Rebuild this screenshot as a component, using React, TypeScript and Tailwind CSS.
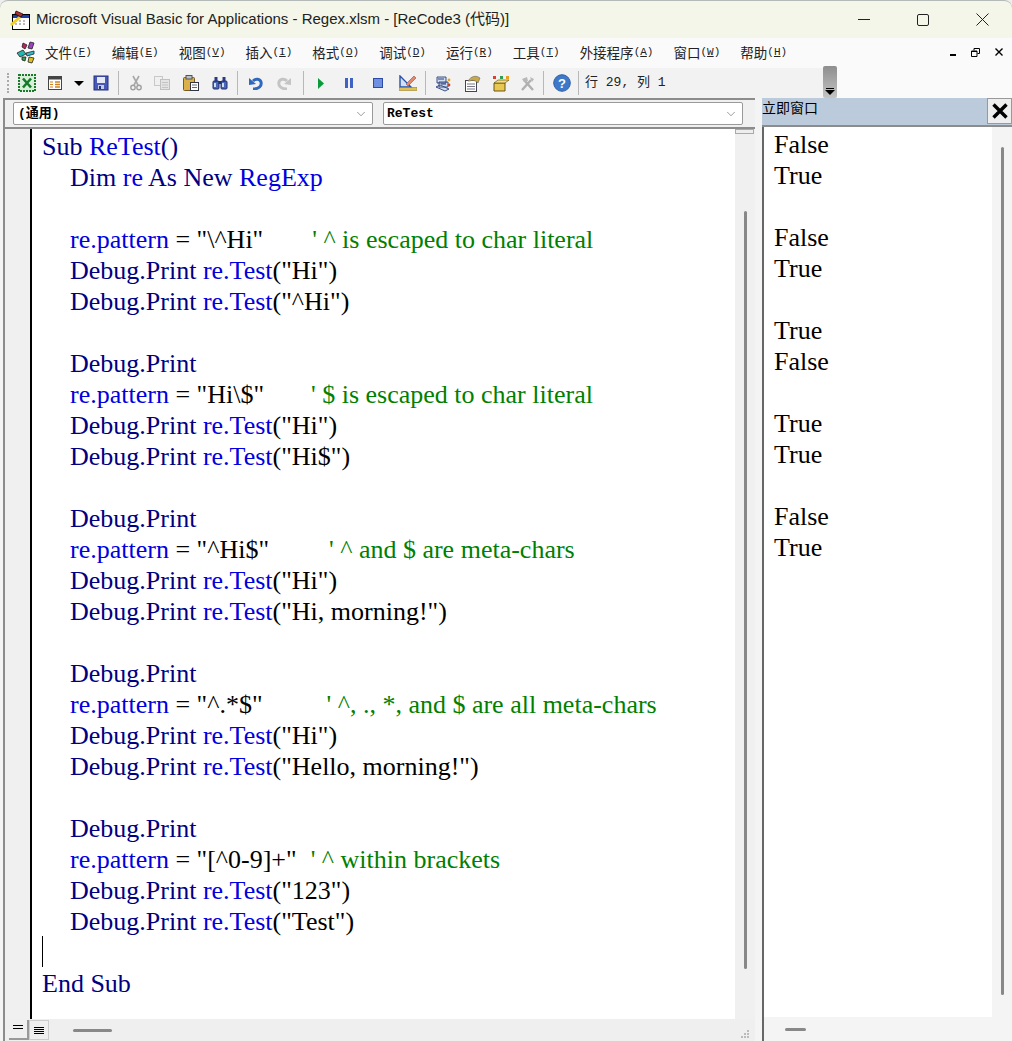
import type { ReactNode } from 'react'
import { ChevronDown } from 'lucide-react'

const SERIF = 'font-["Liberation_Serif","Times_New_Roman",serif]'

const K = ({ children }: { children: ReactNode }) => <span className="text-[#000080]">{children}</span>
const B = ({ children }: { children: ReactNode }) => <span className="text-[#0000e0]">{children}</span>
const C = ({ children }: { children: ReactNode }) => <span className="text-[#008000]">{children}</span>

function Pattern({ value, gap, comment }: { value: string; gap: string; comment: string }) {
  return (
    <div className="h-[31px] pl-[28px]">
      <B>re.pattern</B> = {value}
      <span className={gap} />
      <C>{comment}</C>
    </div>
  )
}

function TestLine({ arg }: { arg: string }) {
  return (
    <div className="h-[31px] pl-[28px]">
      <K>Debug.Print</K> <B>re.Test</B>("{arg}")
    </div>
  )
}

const DebugLine = () => (
  <div className="h-[31px] pl-[28px]">
    <K>Debug.Print</K>
  </div>
)

const Blank = () => <div className="h-[31px]" />

const immediate = ['False', 'True', '', 'False', 'True', '', 'True', 'False', '', 'True', 'True', '', 'False', 'True']

const menus = [
  ['文件', 'F'],
  ['编辑', 'E'],
  ['视图', 'V'],
  ['插入', 'I'],
  ['格式', 'O'],
  ['调试', 'D'],
  ['运行', 'R'],
  ['工具', 'T'],
  ['外接程序', 'A'],
  ['窗口', 'W'],
  ['帮助', 'H'],
]

function Sep() {
  return <div className="w-px h-[24px] bg-[#b8b8b8]" />
}

function AppIcon() {
  return (
    <svg width="22" height="22" viewBox="0 0 22 22">
      <rect x="2.5" y="5.5" width="17" height="15" fill="#fff" stroke="#000" />
      <rect x="3" y="6" width="16" height="3" fill="#1e3fa8" />
      <path d="M5 12h2M9 12h2M13 12h2M5 15h2M9 15h2M13 15h2" stroke="#777" />
      <path d="M1 16 L10 8" stroke="#f0d020" strokeWidth="3" />
      <path d="M6 2 L13 5 L11 8 L5 5Z" fill="#b03030" stroke="#000" strokeWidth="0.7" />
    </svg>
  )
}

function VbaMenuIcon() {
  return (
    <svg width="24" height="24" viewBox="0 0 24 24">
      <path d="M3 13 L9 10 L12 14 L6 17Z" fill="#20b8b0" stroke="#222" strokeWidth="0.8" />
      <path d="M16 2 L20 3 L18 9 L14 8Z" fill="#a040c0" stroke="#222" strokeWidth="0.8" />
      <path d="M9 3 L13 5 L11 9 L8 7Z" fill="#c02060" stroke="#222" strokeWidth="0.8" />
      <path d="M12 13 L20 11 L20 14 L13 16Z" fill="#30c0d0" stroke="#222" strokeWidth="0.8" />
      <path d="M15 17 L20 18 L18 23 L14 22Z" fill="#d8c020" stroke="#222" strokeWidth="0.8" />
      <path d="M8 17 L12 17 L11 21 L8 20Z" fill="#30a050" stroke="#222" strokeWidth="0.8" />
    </svg>
  )
}

function ToolbarIcons() {
  return (
    <>
      {/* excel */}
      <svg width="18" height="18" viewBox="0 0 18 18">
        <rect x="1" y="1" width="16" height="16" fill="#d8efd8" stroke="#1a7a2a" strokeWidth="2" strokeDasharray="2 1" />
        <path d="M5 4.5 L13 13.5 M13 4.5 L5 13.5" stroke="#157a2a" strokeWidth="2.6" />
      </svg>
      {/* project explorer form */}
      <svg className="ml-[11px]" width="16" height="16" viewBox="0 0 16 16">
        <rect x="1.5" y="1.5" width="13" height="13" fill="#fff" stroke="#444" />
        <rect x="2" y="2" width="12" height="2.5" fill="#444" />
        <path d="M3 7h3M3 9.5h3M3 12h3" stroke="#d08020" />
        <path d="M8 7h5M8 9.5h5M8 12h5" stroke="#d08020" strokeWidth="1.5" />
      </svg>
      <div className="ml-[11px] w-0 h-0 border-x-[5px] border-x-transparent border-t-[5px] border-t-black" />
      {/* save */}
      <svg className="ml-[9px]" width="16" height="16" viewBox="0 0 16 16">
        <rect x="1" y="1" width="14" height="14" fill="#4a58b8" stroke="#23307e" />
        <rect x="4" y="2" width="8" height="6" fill="#e6e8f4" />
        <rect x="5" y="10" width="6" height="4" fill="#c8cce0" />
        <rect x="6" y="11" width="2" height="3" fill="#23307e" />
      </svg>
      <div className="ml-[9px]"><Sep /></div>
      {/* cut */}
      <svg className="ml-[10px]" width="14" height="16" viewBox="0 0 14 16">
        <path d="M4 1 L9 10 M10 1 L5 10" stroke="#a8a8a8" strokeWidth="1.6" />
        <circle cx="4" cy="12.5" r="2.2" fill="none" stroke="#a0a0a0" strokeWidth="1.4" />
        <circle cx="10" cy="12.5" r="2.2" fill="none" stroke="#a0a0a0" strokeWidth="1.4" />
      </svg>
      {/* copy */}
      <svg className="ml-[11px]" width="16" height="14" viewBox="0 0 16 14">
        <rect x="0.5" y="0.5" width="8" height="9" fill="#f0f0f0" stroke="#c8c8c8" />
        <rect x="6.5" y="3.5" width="9" height="10" fill="#e4e4e4" stroke="#c0c0c0" />
        <path d="M8 6.5h6M8 9h6M8 11.5h6" stroke="#c4c4c4" />
      </svg>
      {/* paste */}
      <svg className="ml-[13px]" width="16" height="16" viewBox="0 0 16 16">
        <rect x="0.5" y="2.5" width="11" height="13" rx="1" fill="#dcb048" stroke="#7a5a20" />
        <rect x="3" y="0.5" width="6" height="3.5" fill="#b8c0c8" stroke="#555" />
        <rect x="7.5" y="7.5" width="8" height="8" fill="#fff" stroke="#334" />
        <path d="M9 10h5M9 12.5h5" stroke="#667" />
      </svg>
      {/* find */}
      <svg className="ml-[13px]" width="16" height="14" viewBox="0 0 16 14">
        <rect x="1" y="5" width="6" height="8" rx="1" fill="#4a68b8" stroke="#1f2f70" />
        <rect x="9" y="5" width="6" height="8" rx="1" fill="#4a68b8" stroke="#1f2f70" />
        <rect x="2.5" y="1" width="3" height="5" fill="#2a3a80" />
        <rect x="10.5" y="1" width="3" height="5" fill="#2a3a80" />
        <rect x="6.5" y="5" width="3" height="3" fill="#1f2f70" />
        <rect x="2" y="7" width="2" height="4" fill="#cfdcf4" />
        <rect x="10" y="7" width="2" height="4" fill="#cfdcf4" />
      </svg>
      <div className="ml-[9px]"><Sep /></div>
      {/* undo */}
      <svg className="ml-[11px]" width="14" height="14" viewBox="0 0 14 14">
        <path d="M4 13 C10 13 13 10 12 6 C11 3 7 2 4 5" fill="none" stroke="#2f68c0" strokeWidth="3" />
        <path d="M0 2 L7 8 L0 9Z" fill="#2f68c0" />
      </svg>
      {/* redo */}
      <svg className="ml-[14px]" width="14" height="14" viewBox="0 0 14 14">
        <path d="M10 13 C4 13 1 10 2 6 C3 3 7 2 10 5" fill="none" stroke="#c4c4c4" strokeWidth="3" />
        <path d="M14 2 L7 8 L14 9Z" fill="#c4c4c4" />
      </svg>
      <div className="ml-[12px]"><Sep /></div>
      {/* run */}
      <svg className="ml-[14px]" width="6" height="11" viewBox="0 0 6 11">
        <path d="M0 0 L6 5.5 L0 11Z" fill="#0a9a3a" />
      </svg>
      {/* pause */}
      <svg className="ml-[21px]" width="8" height="10" viewBox="0 0 8 10">
        <rect x="0" y="0" width="3" height="10" fill="#3f63c4" />
        <rect x="5" y="0" width="3" height="10" fill="#3f63c4" />
      </svg>
      {/* stop */}
      <svg className="ml-[20px]" width="10" height="10" viewBox="0 0 10 10">
        <rect x="0.5" y="0.5" width="9" height="9" fill="#6f8fe0" stroke="#2d4aa8" />
      </svg>
      {/* design mode */}
      <svg className="ml-[16px]" width="18" height="16" viewBox="0 0 18 16">
        <path d="M1 1 L1 12 L12 12Z" fill="#cfe0f8" stroke="#2a50a8" strokeWidth="1.4" />
        <path d="M7 9 L15 1 L17 3 L9 11Z" fill="#e08870" stroke="#905040" strokeWidth="0.6" />
        <rect x="0" y="12.5" width="18" height="3" fill="#e0c050" stroke="#8a7020" strokeWidth="0.5" />
      </svg>
      <div className="ml-[8px]"><Sep /></div>
      {/* project */}
      <svg className="ml-[9px]" width="17" height="17" viewBox="0 0 17 17">
        <path d="M2 2h9v6h-9zM4 7h9v5h-9zM1 12l9 4 4-2-9-4z" fill="#cfdcf0" stroke="#2a3f78" strokeWidth="0.9" />
        <path d="M3 4h6M6 9h5" stroke="#2a3f78" />
        <circle cx="14" cy="5" r="1.4" fill="#e8a020" />
        <circle cx="14" cy="10" r="1.4" fill="#d04020" />
      </svg>
      {/* properties */}
      <svg className="ml-[12px]" width="17" height="17" viewBox="0 0 17 17">
        <rect x="1.5" y="5.5" width="11" height="11" fill="#fff" stroke="#445" />
        <path d="M3 9h8M3 11.5h8M3 14h8" stroke="#778" />
        <path d="M4 6 C7 1 12 0 16 3 L14 8 C11 5 8 5 6 6Z" fill="#c8a848" stroke="#666" strokeWidth="0.6" />
      </svg>
      {/* object browser */}
      <svg className="ml-[11px]" width="17" height="17" viewBox="0 0 17 17">
        <path d="M2 8h11v8h-11z" fill="#e8c850" stroke="#6a5518" />
        <path d="M2 8l4-3h11l-4 3z" fill="#f4dc80" stroke="#6a5518" strokeWidth="0.7" />
        <rect x="1" y="1" width="3" height="3" fill="#d84030" />
        <rect x="8" y="1" width="3" height="3" fill="#30a050" />
        <rect x="14" y="1" width="3" height="3" fill="#e8a020" />
      </svg>
      {/* toolbox */}
      <svg className="ml-[11px]" width="15" height="15" viewBox="0 0 15 15">
        <path d="M2 14 L11 4 M13 14 L4 4" stroke="#b0b0b0" strokeWidth="2.4" />
        <path d="M2 3 L7 1 L8 5 L4 6Z M10 1 L14 3 L12 6Z" fill="#b8b8b8" />
      </svg>
      <div className="ml-[8px]"><Sep /></div>
      {/* help */}
      <svg className="ml-[9px]" width="18" height="18" viewBox="0 0 18 18">
        <circle cx="9" cy="9" r="8.3" fill="#3e78c8" stroke="#2f5fa8" />
        <text x="9" y="14" textAnchor="middle" fontSize="13" fontWeight="700" fill="#fff" fontFamily="Liberation Sans">?</text>
      </svg>
      <div className="ml-[7px]"><Sep /></div>
    </>
  )
}

function Thumb({ vertical, className }: { vertical?: boolean; className: string }) {
  return <div className={`${vertical ? 'w-[3px]' : 'h-[3px]'} bg-[#888888] rounded-full ${className}`} />
}

export default function App() {
  return (
    <div className={`w-[1012px] h-[1041px] overflow-hidden flex flex-col bg-[#eeeeee] font-["Noto_Sans_CJK_SC","Liberation_Sans",sans-serif] text-black`}>
      {/* title bar */}
      <div className="h-[38px] shrink-0 flex items-center bg-[#f3f6e8] border-t border-[#b4bab8] rounded-t-[8px] pl-[10px]">
        <AppIcon />
        <span className="ml-[4px] text-[15px] text-[#222] font-['Liberation_Sans','Noto_Sans_CJK_SC',sans-serif]">
          Microsoft Visual Basic for Applications - Regex.xlsm - [ReCode3 (代码)]
        </span>
        <div className="ml-auto flex items-center mr-[23px]">
          <div className="w-[12px] h-px bg-[#222]" />
          <div className="ml-[47px] w-[12px] h-[12px] border border-[#222] rounded-[2px]" />
          <svg className="ml-[47px]" width="13" height="13" viewBox="0 0 13 13">
            <path d="M0.5 0.5 L12.5 12.5 M12.5 0.5 L0.5 12.5" stroke="#222" />
          </svg>
        </div>
      </div>

      {/* menu bar */}
      <div className="h-[28px] shrink-0 flex items-center bg-[#fafafa] pl-[14px] pr-[8px]">
        <VbaMenuIcon />
        <div className="ml-[7px] flex gap-[20px] text-[13.5px] text-[#222]">
          {menus.map(([label, key]) => (
            <span key={key} className="flex items-center">
              {label}
              <span className="font-['Liberation_Mono',monospace] text-[11px]">
                (<span className="underline">{key}</span>)
              </span>
            </span>
          ))}
        </div>
        <div className="ml-auto flex items-center gap-[15px] mr-[1px]">
          <div className="w-[6px] h-[2px] bg-black mt-[6px]" />
          <svg width="9" height="9" viewBox="0 0 9 9">
            <path d="M3 2.5V0.5H8.5V5.5H6.5M0.5 3H6V8.5H0.5Z" fill="none" stroke="#000" />
            <path d="M0.5 3.5H6" stroke="#000" />
          </svg>
          <svg width="8" height="8" viewBox="0 0 8 8">
            <path d="M0.5 0.5 L7.5 7.5 M7.5 0.5 L0.5 7.5" stroke="#000" strokeWidth="1.4" />
          </svg>
        </div>
      </div>

      {/* toolbar */}
      <div className="h-[32px] shrink-0 flex bg-[#fafafa]">
        <div className="w-[837px] h-[30px] mt-[2px] flex items-center bg-[#f2f2f2] pl-[7px] relative">
          <div className="w-[2px] h-[20px] border-l-2 border-dotted border-[#aaaaaa]" />
          <div className="ml-[9px] flex items-center">
            <ToolbarIcons />
          </div>
          <span className={`ml-[6px] text-[13px] text-[#222] font-['Liberation_Mono','Noto_Sans_CJK_SC',monospace]`}>
            行 29, 列 1
          </span>
          <div className="absolute right-0 top-[-2px] w-[14px] h-[32px] bg-gradient-to-b from-[#8e8e8e] to-[#c4c4c4] rounded-[2px] flex flex-col items-center justify-end pb-[3px]">
            <div className="w-[8px] h-px bg-black mb-px" />
            <div className="w-0 h-0 border-x-[5px] border-x-transparent border-t-[5px] border-t-black" />
          </div>
        </div>
      </div>

      {/* body */}
      <div className="flex-1 min-h-0 flex bg-[#f4f4f4]">
        {/* code window */}
        <div className="w-[752px] ml-[3px] flex flex-col border-l-[2px] border-t-[2px] border-[#8c8c8c] bg-[#f0f0f0]">
          <div className="h-[29px] shrink-0 flex items-center gap-[10px] px-[8px] border-b-[2px] border-[#8c8c8c]">
            <div className="w-[360px] h-[23px] bg-white border border-[#9a9a9a] rounded-[2px] flex items-center justify-between pl-[4px] pr-[4px]">
              <span className="text-[13px] font-['Liberation_Mono','Noto_Sans_CJK_SC',monospace] font-bold">(通用)</span>
              <ChevronDown size={14} strokeWidth={1} className="text-[#555]" />
            </div>
            <div className="w-[360px] h-[23px] bg-white border border-[#9a9a9a] rounded-[2px] flex items-center justify-between pl-[3px] pr-[4px]">
              <span className="text-[13px] font-['Liberation_Mono',monospace] font-bold">ReTest</span>
              <ChevronDown size={14} strokeWidth={1} className="text-[#555]" />
            </div>
          </div>
          <div className="flex-1 min-h-0 flex">
            <div className="w-[25px] shrink-0 bg-[#f0f0f0]" />
            <div className={`flex-1 min-w-0 bg-white border-l-[2px] border-black pl-[10px] pt-[2px] text-[26px] leading-[31px] whitespace-pre ${SERIF}`}>
              <div className="h-[31px]"><K>Sub</K> <B>ReTest</B><K>()</K></div>
              <div className="h-[31px] pl-[28px]"><K>Dim</K> <B>re</B> <K>As New</K> <B>RegExp</B></div>
              <Blank />
              <Pattern value={'"\\^Hi"'} gap="inline-block w-[49px]" comment="' ^ is escaped to char literal" />
              <TestLine arg="Hi" />
              <TestLine arg="^Hi" />
              <Blank />
              <DebugLine />
              <Pattern value={'"Hi\\$"'} gap="inline-block w-[47px]" comment="' $ is escaped to char literal" />
              <TestLine arg="Hi" />
              <TestLine arg="Hi$" />
              <Blank />
              <DebugLine />
              <Pattern value={'"^Hi$"'} gap="inline-block w-[60px]" comment="' ^ and $ are meta-chars" />
              <TestLine arg="Hi" />
              <TestLine arg="Hi, morning!" />
              <Blank />
              <DebugLine />
              <Pattern value={'"^.*$"'} gap="inline-block w-[64px]" comment="' ^, ., *, and $ are all meta-chars" />
              <TestLine arg="Hi" />
              <TestLine arg="Hello, morning!" />
              <Blank />
              <DebugLine />
              <Pattern value={'"[^0-9]+"'} gap="inline-block w-[14px]" comment="' ^ within brackets" />
              <TestLine arg="123" />
              <TestLine arg="Test" />
              <div className="h-[31px] relative">
                <div className="absolute left-0 top-[-1px] w-px h-[31px] bg-black" />
              </div>
              <div className="h-[31px]"><K>End Sub</K></div>
            </div>
            <div className="w-[20px] shrink-0 bg-[#f0f0f0] flex flex-col items-center relative">
              <div className="absolute top-0 left-0 w-[19px] h-[5px] bg-[#eeeeee] border border-[#aaaaaa]" />
              <Thumb vertical className="mt-[82px] h-[758px]" />
            </div>
          </div>
          <div className="h-[22px] shrink-0 flex items-center bg-[#efefef] relative">
            <div className="w-[20px] h-[20px] ml-[4px] border-b-2 border-r-2 border-[#999999] flex flex-col items-center pt-[5px] gap-[2px]">
              <div className="w-[10px] h-px bg-black" />
              <div className="w-[10px] h-px bg-black" />
            </div>
            <div className="w-[20px] h-[20px] border border-[#cccccc] flex flex-col items-center justify-center gap-px">
              <div className="w-[10px] h-px bg-black" />
              <div className="w-[10px] h-px bg-black" />
              <div className="w-[10px] h-px bg-black" />
              <div className="w-[10px] h-px bg-black" />
            </div>
            <Thumb className="ml-[24px] w-[39px]" />
            <div className="absolute right-[6px] bottom-[3px] grid grid-cols-3 gap-px">
              <div className="w-[2px] h-[2px]" />
              <div className="w-[2px] h-[2px]" />
              <div className="w-[2px] h-[2px] bg-[#bbbbbb]" />
              <div className="w-[2px] h-[2px]" />
              <div className="w-[2px] h-[2px] bg-[#bbbbbb]" />
              <div className="w-[2px] h-[2px] bg-[#bbbbbb]" />
              <div className="w-[2px] h-[2px] bg-[#bbbbbb]" />
              <div className="w-[2px] h-[2px] bg-[#bbbbbb]" />
              <div className="w-[2px] h-[2px] bg-[#bbbbbb]" />
            </div>
          </div>
        </div>

        {/* immediate window */}
        <div className="w-[250px] ml-[7px] flex flex-col">
          <div className="h-[29px] shrink-0 flex items-start justify-between bg-[#bccbdc] border-b-[2px] border-[#8c8c8c]">
            <span className="text-[14px] leading-[19px] text-black">立即窗口</span>
            <div className="w-[25px] h-[26px] bg-[#eeeeee] border border-[#999999] flex items-center justify-center">
              <svg width="16" height="16" viewBox="0 0 16 16">
                <path d="M1.5 1.5 L14.5 14.5 M14.5 1.5 L1.5 14.5" stroke="#000" strokeWidth="3.4" />
              </svg>
            </div>
          </div>
          <div className="flex-1 min-h-0 flex border-l-[2px] border-[#666666]">
            <div className={`flex-1 min-w-0 bg-white pl-[10px] pt-[2px] text-[26px] leading-[31px] ${SERIF}`}>
              {immediate.map((t, i) => (
                <div key={i} className="h-[31px]">{t}</div>
              ))}
            </div>
            <div className="w-[20px] shrink-0 flex flex-col items-center">
              <Thumb vertical className="mt-[20px] h-[848px]" />
            </div>
          </div>
          <div className="h-[24px] shrink-0 flex items-center border-l-[2px] border-[#666666]">
            <Thumb className="ml-[21px] w-[21px]" />
          </div>
        </div>
      </div>
    </div>
  )
}
